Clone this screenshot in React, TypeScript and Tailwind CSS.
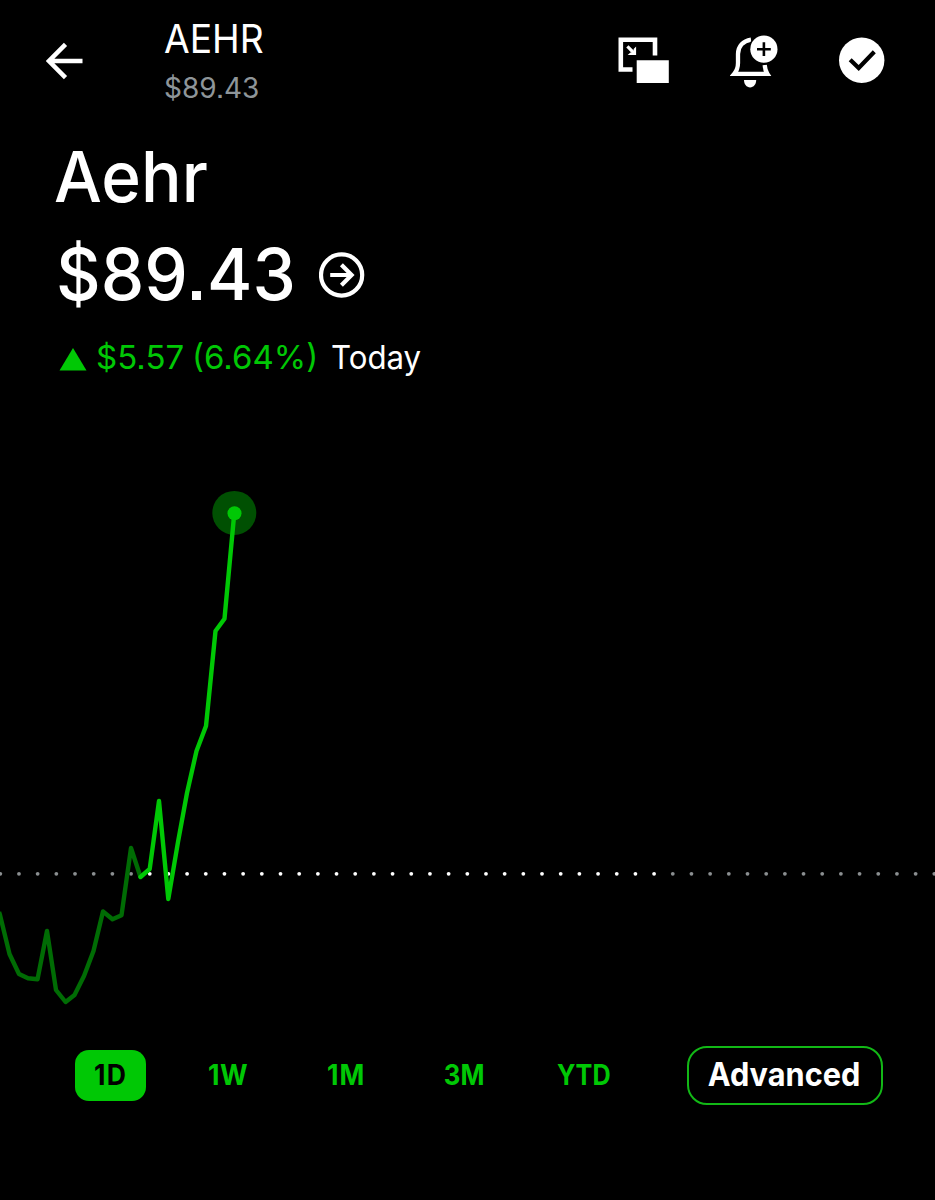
const FONT = "font-['Inter','Liberation_Sans',sans-serif] [font-feature-settings:'ss07'_1]";

const EARLY = "-1,912 0,915 9.5,954 19,974 28,978.3 37.5,979.3 47,931 56,990 65.6,1002 74.5,995 84,976 93.5,951 103,911.5 112.5,919.3 121.5,915.3 131,848 140.5,877";
const LIVE = "140.5,877 149.7,869 159,801 168.3,899 178,842 187,793 196.5,751 206,726 215.5,631 224.5,618.7 234.3,513";

const DOTS = Array.from({ length: 51 }, (_, i) => i);

function BackIcon() {
  return (
    <svg width="37" height="38" viewBox="0 0 37 38" fill="none" stroke="#fff" strokeWidth="4.5">
      <path d="M3 19H36.5M19.5 2.4L3 19L19.5 35.6" />
    </svg>
  );
}

function PipIcon() {
  return (
    <svg width="52" height="48" viewBox="0 0 52 48">
      <path d="M14.5 32.5H2.8V2.8H37V18.5" fill="none" stroke="#fff" strokeWidth="4.6" />
      <path d="M18.7 23.2H50.8V46H18.7Z" fill="#fff" />
      <path d="M9.4 9.4L16.8 16.8" stroke="#fff" strokeWidth="3.2" />
      <path d="M18.1 9.6V18.1H9.7L12.4 15.6L15.5 15.500L15.600 12Z" fill="#fff" />
    </svg>
  );
}

function BellIcon() {
  return (
    <svg width="50" height="54" viewBox="0 0 50 54">
      <path d="M21 4.6C13 5.8 8 11.5 8 19V28C8 32.5 6.8 35.8 4.2 38.9H37.4C36 36.7 35 34.6 34.7 30" fill="none" stroke="#fff" strokeWidth="4.3" />
      <path d="M14 45.1H26.2C26.2 49.5 23.6 52.5 20.1 52.5S14 49.5 14 45.1Z" fill="#fff" />
      <circle cx="33.9" cy="14.2" r="15.3" fill="#000" />
      <circle cx="33.9" cy="14.2" r="13.6" fill="#fff" />
      <path d="M33.9 7.3V21.1M27 14.2H40.8" stroke="#000" strokeWidth="2.6" />
    </svg>
  );
}

function CheckIcon() {
  return (
    <svg width="46" height="46" viewBox="0 0 46 46">
      <circle cx="22.7" cy="23.2" r="22.7" fill="#fff" />
      <path d="M11.2 22.7L19.7 31L35.3 14.8" fill="none" stroke="#000" strokeWidth="4.2" />
    </svg>
  );
}

function GoIcon() {
  return (
    <svg width="46" height="46" viewBox="0 0 46 46" fill="none" stroke="#fff" strokeWidth="4.2">
      <circle cx="22.6" cy="23" r="20.6" />
      <path d="M11.2 23H32.5M22.4 12.8L32.6 23L22.4 33.2" />
    </svg>
  );
}

function Chart() {
  return (
    <svg className="block w-full" height="600" viewBox="0 430 935 600">
      {DOTS.map((i) => (
        <circle key={i} cx={0.3 + i * 18.68} cy="873.8" r="1.9" fill={i >= 8 && i <= 35 ? "#ffffff" : "#8b8f91"} />
      ))}
      <polyline points={EARLY} fill="none" stroke="#006c04" strokeWidth="4.4" strokeLinejoin="round" />
      <circle cx="234.3" cy="512.9" r="22" fill="#005002" />
      <polyline points={LIVE} fill="none" stroke="#00c805" strokeWidth="4.4" strokeLinejoin="round" strokeLinecap="round" />
      <circle cx="234.5" cy="513.2" r="7" fill="#00c805" />
    </svg>
  );
}

export default function App() {
  return (
    <main className={`${FONT} flex h-[1200px] w-[935px] flex-col overflow-hidden bg-black text-white`}>
      <header className="flex h-[130px] shrink-0">
        <button className="ml-[46px] mt-[42px] h-[38px] w-[37px]"><BackIcon /></button>
        <div className="ml-[81px] flex w-[454px] flex-col items-start pt-[19px]">
          <div className="h-10 origin-left scale-x-[0.955] text-[39px] font-normal leading-10">AEHR</div>
          <div className="mt-[14px] h-[30px] origin-left text-[28px] font-normal leading-[30px] text-[#8e9599]">$89.43</div>
        </div>
        <button className="mt-[37px] h-12 w-[52px]"><PipIcon /></button>
        <button className="ml-[60px] mt-[35px] h-[54px] w-[50px]"><BellIcon /></button>
        <button className="ml-[59px] mt-[37px] h-[46px] w-[46px]"><CheckIcon /></button>
      </header>
      <section className="flex h-[300px] shrink-0 flex-col items-start pl-[54px]">
        <h1 className="mt-[7px] h-20 origin-left scale-x-[0.965] text-[70px] font-medium leading-[80px]">Aehr</h1>
        <div className="mt-[18px] flex h-20 items-center pl-0.5">
          <div className="-mt-0.5 w-[263px] whitespace-nowrap">
            <span className="inline-block origin-left scale-x-[0.975] text-[71px] font-medium leading-[80px]">$89.43</span>
          </div>
          <GoIcon />
        </div>
        <div className="mt-[22px] flex h-10 items-center pl-0.5 text-[33px] leading-10">
          <svg className="ml-[3px] mt-[3px]" width="28" height="24" viewBox="0 0 28 24"><path d="M14 1L27.5 23.5H.5Z" fill="#00c805" /></svg>
          <div className="ml-[9px] w-[235px] whitespace-nowrap">
            <span className="text-[#00c805] [word-spacing:-1.5px]">$5.57 (6.64%)</span>
          </div>
          <span className="inline-block origin-left scale-x-[0.945]">Today</span>
        </div>
      </section>
      <Chart />
      <nav className="flex h-[90px] shrink-0 items-center pl-[75px] text-[28px] font-bold text-[#00c805]">
        <button className="flex h-[51px] w-[71px] items-center justify-center rounded-[14px] bg-[#00c805] text-black"><span className="scale-x-[0.95] tracking-[1.5px]">1D</span></button>
        <button className="ml-[47px] flex w-[71px] justify-center"><span className="scale-x-[0.95] tracking-[0.5px]">1W</span></button>
        <button className="ml-[47px] flex w-[71px] justify-center"><span className="scale-x-[0.95] tracking-[1px]">1M</span></button>
        <button className="ml-[47px] flex w-[71px] justify-center"><span className="scale-x-[0.92]">3M</span></button>
        <button className="ml-[48px] flex w-[71px] justify-center"><span className="scale-x-[0.9]">YTD</span></button>
        <button className="ml-[68px] flex h-[59px] w-[196px] items-center justify-center rounded-[20px] border-2 border-[#12b816] text-[33px] font-bold text-white"><span className="-ml-0.5 scale-x-[0.93]">Advanced</span></button>
      </nav>
    </main>
  );
}
